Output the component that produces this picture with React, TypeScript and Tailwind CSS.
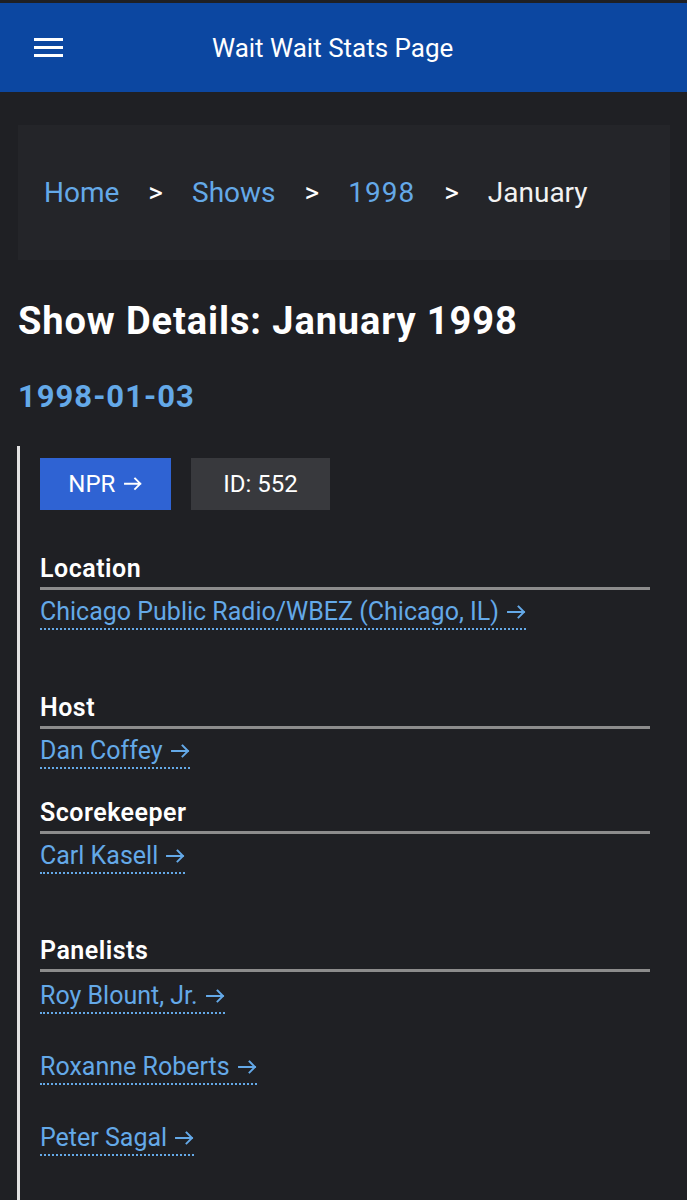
import React from 'react';

const linkCls =
  'text-[#64a9e8] border-b-2 border-dotted border-[#64a9e8] pb-[2px]';

function Arrow() {
  return (
    <svg
      viewBox="0 0 19 14"
      className="inline-block ml-[2px] w-[0.76em] h-[0.56em] align-[1px]"
      fill="none"
      stroke="currentColor"
      strokeWidth="1.9"
      strokeLinecap="square"
    >
      <path d="M1 7h16M11.5 1.5 17 7l-5.5 5.5" />
    </svg>
  );
}

function SectionHead({ children }: { children: React.ReactNode }) {
  return (
    <h3 className="text-[25px] leading-[28px] font-semibold tracking-[0.5px] text-white pb-[4px] border-b-[3px] border-[#8c8c8c]">
      {children}
    </h3>
  );
}

function PersonLink({ name }: { name: string }) {
  return (
    <div className="text-[25px] leading-[32px]">
      <a href="#" className={linkCls}>
        {name} <Arrow />
      </a>
    </div>
  );
}

export default function App() {
  return (
    <div className="min-h-screen bg-[#1f2024] pt-[3px] font-[Roboto,'Noto_Sans',sans-serif] text-white">
      {/* top bar */}
      <header className="h-[89px] bg-[#0c47a1] flex items-center">
        <button className="ml-[34px] w-[29px] flex flex-col gap-[5px]">
          <span className="block h-[3px] bg-white" />
          <span className="block h-[3px] bg-white" />
          <span className="block h-[3px] bg-white" />
        </button>
        <h1 className="ml-[149px] text-[26px] leading-none font-normal">Wait Wait Stats Page</h1>
      </header>

      <main className="px-[18px] pr-[17px]">
        {/* breadcrumb */}
        <nav className="mt-[33px] h-[135px] bg-[#242529] flex items-center pl-[26px] gap-[29px] text-[28px]">
          <a href="#" className="text-[#64a9e8]">Home</a>
          <span>&gt;</span>
          <a href="#" className="text-[#64a9e8]">Shows</a>
          <span>&gt;</span>
          <a href="#" className="text-[#64a9e8] tracking-[1px]">1998</a>
          <span>&gt;</span>
          <span className="text-[#f2f2f2]">January</span>
        </nav>

        <h1 className="mt-[39px] text-[38px] leading-[44px] font-bold tracking-[0.9px]">Show Details: January 1998</h1>
        <h2 className="mt-[36px] text-[31px] leading-[36px] font-bold tracking-[1px] text-[#64a9e8]">1998-01-03</h2>

        <section className="mt-[31px] -ml-[1px] border-l-[3px] border-[#e2e2e2] pl-[20px] pr-[20px] pt-[12px] pb-[60px]">
          <div className="flex gap-[20px]">
            <a href="#" className="w-[131px] h-[52px] bg-[#2f63d3] flex items-center justify-center gap-[7px] text-[24px]">
              NPR <Arrow />
            </a>
            <div className="w-[139px] h-[52px] bg-[#38393d] flex items-center justify-center text-[24px]">
              ID: 552
            </div>
          </div>

          <div className="mt-[45px]">
            <SectionHead>Location</SectionHead>
            <div className="mt-[6px]">
              <PersonLink name="Chicago Public Radio/WBEZ (Chicago, IL)" />
            </div>
          </div>

          <div className="mt-[66px]">
            <SectionHead>Host</SectionHead>
            <div className="mt-[6px]">
              <PersonLink name="Dan Coffey" />
            </div>
          </div>

          <div className="mt-[32px]">
            <SectionHead>Scorekeeper</SectionHead>
            <div className="mt-[6px]">
              <PersonLink name="Carl Kasell" />
            </div>
          </div>

          <div className="mt-[65px]">
            <SectionHead>Panelists</SectionHead>
            <div className="mt-[8px] flex flex-col gap-[39px]">
              <PersonLink name="Roy Blount, Jr." />
              <PersonLink name="Roxanne Roberts" />
              <PersonLink name="Peter Sagal" />
            </div>
          </div>
        </section>
      </main>
    </div>
  );
}
